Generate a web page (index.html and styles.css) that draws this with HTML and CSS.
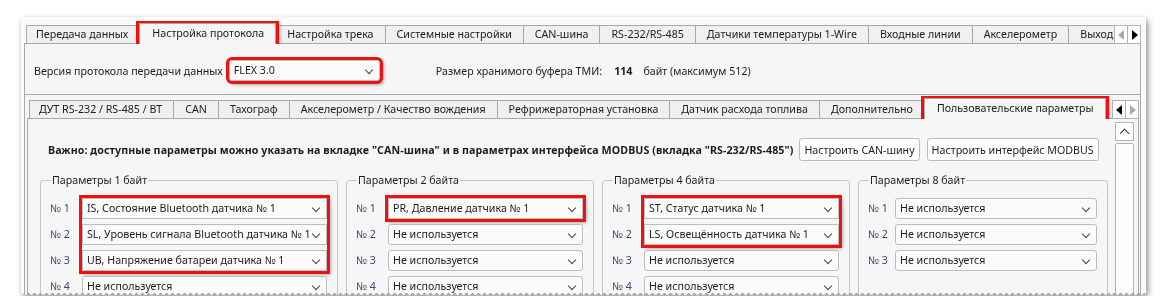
FILE: index.html
```html
<!DOCTYPE html>
<html lang="ru">

<head>
    <meta charset="UTF-8">
    <meta name="viewport" content="width=device-width, initial-scale=1.0">
    <title>Настройка протокола</title>
    <link rel="stylesheet" href="styles.css">
</head>

<body>
    <div class="wrap">
        <div class="shot">
            <div class="tabbar">
                <div class="tablist">
                    <div class="tab">Передача данных</div>
                    <div class="tab active mark">Настройка протокола</div>
                    <div class="tab">Настройка трека</div>
                    <div class="tab">Системные настройки</div>
                    <div class="tab">CAN-шина</div>
                    <div class="tab">RS-232/RS-485</div>
                    <div class="tab">Датчики температуры 1-Wire</div>
                    <div class="tab">Входные линии</div>
                    <div class="tab">Акселерометр</div>
                    <div class="tab">Выходы</div>
                </div>
                <div class="scrollers">
                    <span class="arrow left off"></span>
                    <span class="arrow right"></span>
                </div>
            </div>

            <div class="pane">
                <div class="proto">
                    <span>Версия протокола передачи данных</span>
                    <div class="combo proto-combo mark">FLEX 3.0<i class="chev"></i></div>
                    <span class="buffer">Размер хранимого буфера ТМИ:</span>
                    <b class="size">114</b>
                    <span class="unit">байт (максимум 512)</span>
                </div>

                <div class="frame">
                    <div class="tabbar inner">
                        <div class="tablist">
                            <div class="tab">ДУТ RS-232 / RS-485 / BT</div>
                            <div class="tab">CAN</div>
                            <div class="tab">Тахограф</div>
                            <div class="tab">Акселерометр / Качество вождения</div>
                            <div class="tab">Рефрижераторная установка</div>
                            <div class="tab">Датчик расхода топлива</div>
                            <div class="tab">Дополнительно</div>
                            <div class="tab active mark">Пользовательские параметры</div>
                        </div>
                        <div class="scrollers">
                            <span class="arrow left"></span>
                            <span class="arrow right off"></span>
                        </div>
                    </div>

                    <div class="pane inner-pane">
                        <div class="content">
                            <div class="note">
                                <b>Важно: доступные параметры можно указать на вкладке "CAN-шина" и в параметрах интерфейса MODBUS (вкладка "RS-232/RS-485")</b>
                                <button class="btn">Настроить CAN-шину</button>
                                <button class="btn">Настроить интерфейс MODBUS</button>
                            </div>

                            <div class="groups">
                                <fieldset class="group">
                                    <legend>Параметры 1 байт</legend>
                                    <div class="labels">
                                        <span>№ 1</span><span>№ 2</span><span>№ 3</span><span>№ 4</span>
                                    </div>
                                    <div class="fields">
                                        <div class="mark">
                                            <div class="combo">IS, Состояние Bluetooth датчика № 1<i class="chev"></i></div>
                                            <div class="combo">SL, Уровень сигнала Bluetooth датчика № 1<i class="chev"></i></div>
                                            <div class="combo">UB, Напряжение батареи датчика № 1<i class="chev"></i></div>
                                        </div>
                                        <div class="combo">Не используется<i class="chev"></i></div>
                                    </div>
                                </fieldset>

                                <fieldset class="group">
                                    <legend>Параметры 2 байта</legend>
                                    <div class="labels">
                                        <span>№ 1</span><span>№ 2</span><span>№ 3</span><span>№ 4</span>
                                    </div>
                                    <div class="fields">
                                        <div class="mark">
                                            <div class="combo">PR, Давление датчика № 1<i class="chev"></i></div>
                                        </div>
                                        <div class="combo">Не используется<i class="chev"></i></div>
                                        <div class="combo">Не используется<i class="chev"></i></div>
                                        <div class="combo">Не используется<i class="chev"></i></div>
                                    </div>
                                </fieldset>

                                <fieldset class="group">
                                    <legend>Параметры 4 байта</legend>
                                    <div class="labels">
                                        <span>№ 1</span><span>№ 2</span><span>№ 3</span><span>№ 4</span>
                                    </div>
                                    <div class="fields">
                                        <div class="mark">
                                            <div class="combo">ST, Статус датчика № 1<i class="chev"></i></div>
                                            <div class="combo">LS, Освещённость датчика № 1<i class="chev"></i></div>
                                        </div>
                                        <div class="combo">Не используется<i class="chev"></i></div>
                                        <div class="combo">Не используется<i class="chev"></i></div>
                                    </div>
                                </fieldset>

                                <fieldset class="group narrow">
                                    <legend>Параметры 8 байт</legend>
                                    <div class="labels">
                                        <span>№ 1</span><span>№ 2</span><span>№ 3</span>
                                    </div>
                                    <div class="fields">
                                        <div class="combo">Не используется<i class="chev"></i></div>
                                        <div class="combo">Не используется<i class="chev"></i></div>
                                        <div class="combo">Не используется<i class="chev"></i></div>
                                    </div>
                                </fieldset>
                            </div>
                        </div>

                        <div class="vscroll">
                            <div class="vbtn"><i class="caret"></i></div>
                            <div class="handle"></div>
                        </div>
                    </div>
                </div>
            </div>
        </div>
    </div>
</body>

</html>
```

FILE: styles.css
```css
* {
    margin: 0;
    padding: 0;
    box-sizing: border-box;
}

body {
    background-color: #ffffff;
    font-family: "Noto Sans", "Open Sans", sans-serif;
    font-size: 8pt;
    color: #1c1c1c;
}

/* screenshot with shadow and torn bottom edge */
.wrap {
    margin: 17px 0 0 21px;
    width: 1125px;
    filter: drop-shadow(2px 3px 3px rgba(0, 0, 0, .45));
}

.shot {
    height: 279px;
    background-color: #fafafa;
    padding: 8px 5px 0 3px;
    overflow: hidden;
    -webkit-mask: conic-gradient(from -45deg at bottom, #0000, #000 1deg 89deg, #0000 90deg) 50% / 6px 100%;
    mask: conic-gradient(from -45deg at bottom, #0000, #000 1deg 89deg, #0000 90deg) 50% / 6px 100%;
}

/* tabs */
.tabbar {
    display: flex;
    height: 19px;
    padding-left: 2px;
    position: relative;
    z-index: 1;
}

.tablist {
    flex: 1;
    min-width: 0;
    display: flex;
    overflow: hidden;
    padding-top: 4px;
    margin-top: -4px;
    padding-bottom: 4px;
    padding-left: 2px;
    margin-left: -2px;
}

.tab {
    flex-shrink: 0;
    height: 19px;
    line-height: 17px;
    padding: 0 11px;
    border: 1px solid #a8a8a8;
    margin-right: -1px;
    background-color: #f0f0f0;
    white-space: nowrap;
}

.tab:first-child {
    padding-left: 9px;
}

.tab.active {
    background-color: #f6f6f6;
    height: 21px;
    margin-top: -2px;
    line-height: 19px;
    border-bottom: none;
    padding: 0 11px 0 12px;
    position: relative;
    z-index: 2;
}

.scrollers {
    display: flex;
    flex-shrink: 0;
}

.arrow {
    width: 14px;
    height: 19px;
    background-color: #ffffff;
    border: 1px solid #b4b4b4;
    position: relative;
}

.arrow + .arrow {
    margin-left: -1px;
}

.arrow::after {
    content: "";
    position: absolute;
    top: 4px;
    left: 3px;
    border-top: 5px solid transparent;
    border-bottom: 5px solid transparent;
}

.arrow.left::after {
    border-right: 6px solid #000000;
}

.arrow.right::after {
    left: 4px;
    border-left: 6px solid #000000;
}

.arrow.left.off::after {
    border-right-color: #a9a9a9;
}

.arrow.right.off::after {
    border-left-color: #a9a9a9;
}

.pane {
    background-color: #f6f6f6;
    border: 1px solid #a8a8a8;
    margin-top: -1px;
    height: 260px;
}

/* annotation boxes */
.mark {
    outline: 3px solid #ee1111;
    outline-offset: 0;
    box-shadow: 2px 2px 4px 1px rgba(0, 0, 0, .45);
}

/* combo boxes */
.combo {
    position: relative;
    height: 21px;
    line-height: 19px;
    padding: 0 20px 0 4px;
    border: 1px solid #bdbdbd;
    border-radius: 3px;
    background-color: #fbfbfb;
    white-space: nowrap;
    overflow: hidden;
}

.mark .combo {
    border-radius: 0;
}

.chev {
    position: absolute;
    right: 7px;
    top: 6px;
    width: 6px;
    height: 6px;
    border-right: 1px solid #444444;
    border-bottom: 1px solid #444444;
    transform: rotate(45deg);
}

.proto {
    display: flex;
    align-items: center;
    height: 21px;
    margin: 16px 0 0 9px;
}

.proto-combo {
    width: 151px;
    margin-left: 6px;
}

.buffer {
    margin-left: 56px;
}

.size {
    margin-left: 12px;
}

.unit {
    margin-left: 11px;
}

/* inner tab widget */
.frame {
    margin-top: 13px;
    border-top: 1px solid #a8a8a8;
    padding: 5px 1px 0 2px;
}

.inner-pane {
    display: flex;
    height: 200px;
}

.content {
    flex: 1;
    min-width: 0;
    padding: 19px 0 0 12px;
}

.note {
    display: flex;
    align-items: center;
    padding-left: 8px;
}

.note b {
    font-weight: 700;
    letter-spacing: .08px;
    white-space: nowrap;
}

.btn {
    font: inherit;
    color: inherit;
    height: 23px;
    padding: 0 4px;
    margin-left: 7px;
    background-color: #ffffff;
    border: 1px solid #bdbdbd;
    border-radius: 3px;
    white-space: nowrap;
}

.note b + .btn {
    margin-left: 6px;
}

.groups {
    display: grid;
    grid-template-columns: 298px 248px 248px 250px;
    gap: 8px;
    margin-top: 11px;
}

.group {
    min-width: 0;
    display: flex;
    border: 1px solid #c6c6c6;
    border-radius: 3px;
    padding: 9px 10px 0 8px;
}

.group legend {
    padding: 0 1px;
    margin-left: 2px;
    line-height: 17px;
}

.labels {
    width: 33px;
    flex-shrink: 0;
    display: flex;
    flex-direction: column;
    gap: 5px;
    color: #3a4a78;
    padding-left: 1px;
}

.narrow .labels {
    width: 28px;
}

.labels span {
    height: 21px;
    line-height: 21px;
}

.fields {
    flex: 1;
    min-width: 0;
    display: flex;
    flex-direction: column;
    gap: 5px;
}

.fields .mark {
    display: flex;
    flex-direction: column;
    gap: 5px;
}

/* vertical scroll bar */
.vscroll {
    width: 19px;
    flex-shrink: 0;
    margin: 3px 4px 0 8px;
    display: flex;
    flex-direction: column;
}

.vbtn {
    height: 19px;
    background-color: #ffffff;
    border: 1px solid #b4b4b4;
    position: relative;
}

.caret {
    position: absolute;
    left: 5px;
    top: 7px;
    width: 7px;
    height: 7px;
    border-left: 1px solid #333333;
    border-top: 1px solid #333333;
    transform: rotate(45deg);
}

.handle {
    flex: 1;
    margin-top: 2px;
    background-color: #fdfdfd;
    border: 1px solid #b4b4b4;
    border-radius: 2px;
}
```
